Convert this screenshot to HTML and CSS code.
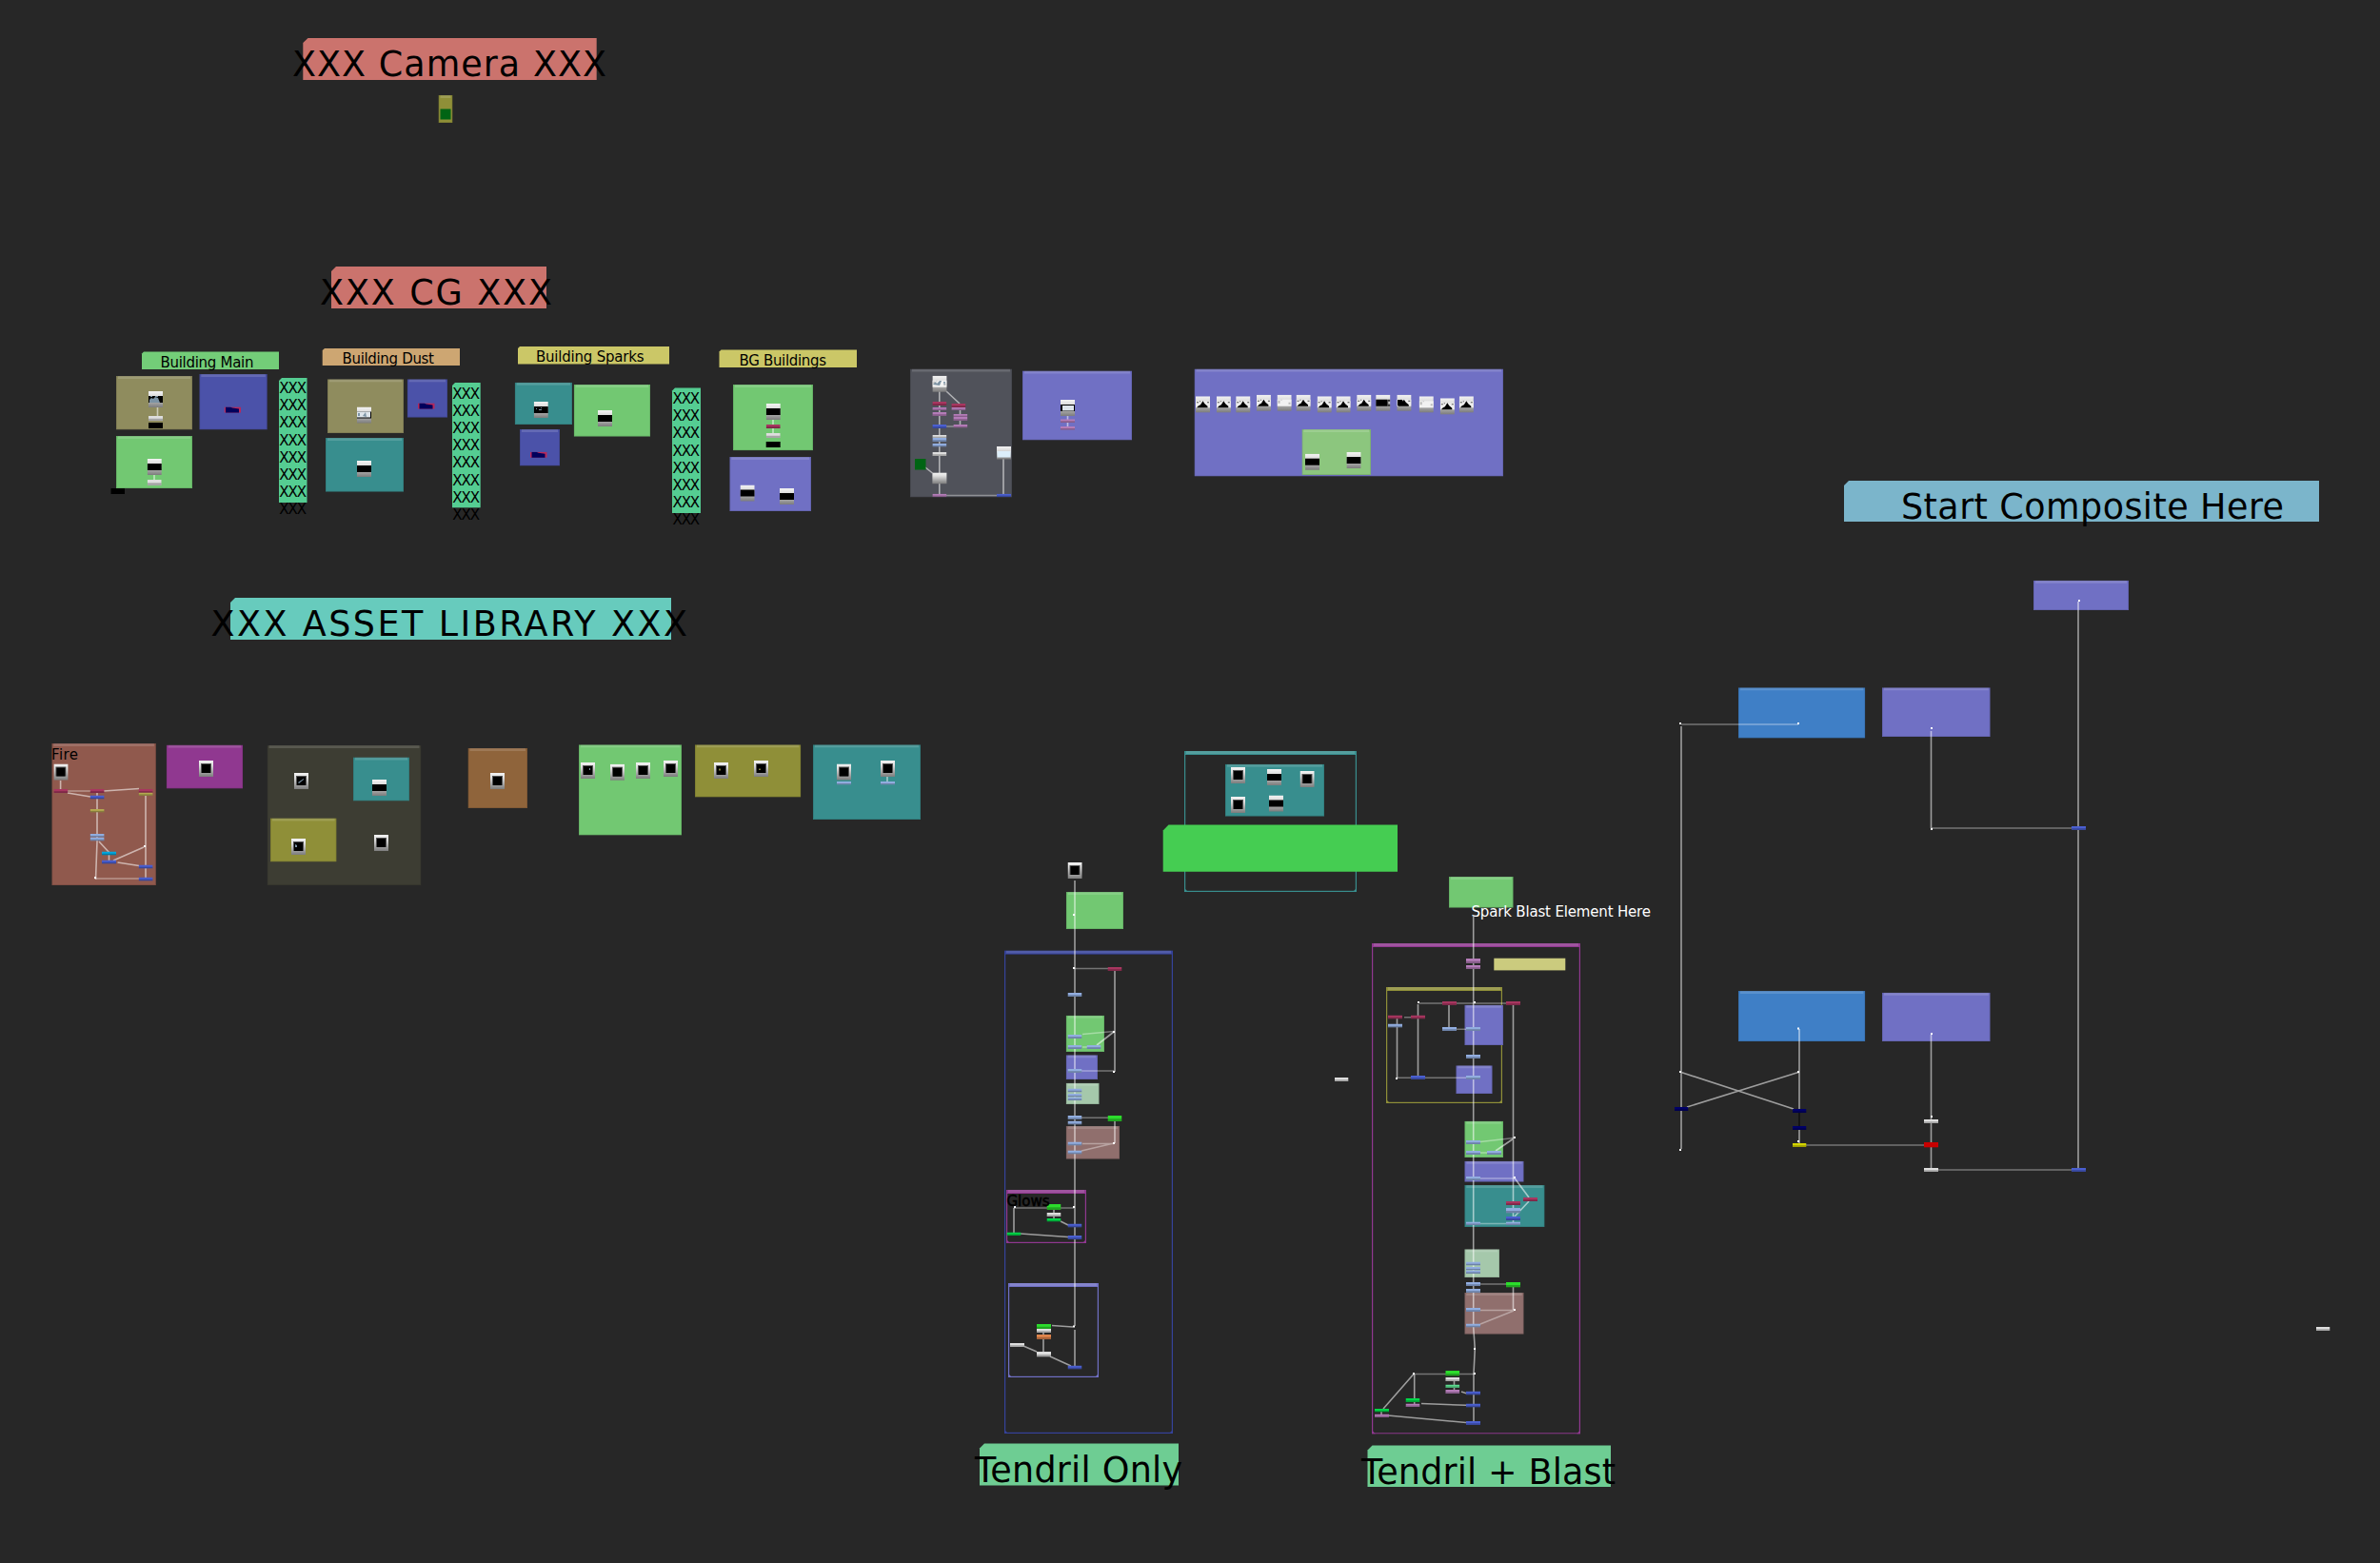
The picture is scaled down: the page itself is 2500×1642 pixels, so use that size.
FILE: index.html
```html
<!DOCTYPE html>
<html lang="en">
<head>
<meta charset="utf-8">
<title>Node Graph</title>
<link rel="stylesheet" href="styles.css">
</head>
<body>
<main class="graph">
<svg class="canvas" width="2500" height="1642" viewBox="0 0 2500 1642">
<defs>
<linearGradient id="metal" x1="0" y1="0" x2="0" y2="1"><stop offset="0" stop-color="#f4f4f4"/><stop offset=".3" stop-color="#dcdcdc"/><stop offset="1" stop-color="#7c7c7c"/></linearGradient>
<symbol id="bd"><rect class="fill" width="100%" height="100%"/><rect class="edge" /><rect class="shine"/></symbol>
<symbol id="frame"><rect class="outline"/><rect class="cap"/><rect class="shine"/><svg class="corner" x="0" y="100%"><path class="fill" d="M0 0v-4l4 4z"/></svg><svg class="corner" x="100%" y="100%"><path class="fill" d="M0 0v-4l-4 4z"/></svg></symbol>
<symbol id="bar"><rect class="fill" width="100%" height="100%"/><rect class="shade" y="55%" width="100%" height="45%"/></symbol>
<symbol id="wide"><rect width="15" height="17" fill="url(#metal)"/><rect y="5" width="15" height="7" fill="#000"/></symbol>
<symbol id="square"><rect width="15" height="17" fill="url(#metal)"/><rect x="2" y="3" width="11" height="10" fill="#555"/><rect x="3" y="4" width="9" height="9" fill="#000"/></symbol>
<symbol id="shot"><rect width="15" height="17" fill="url(#metal)"/><rect y="5" width="15" height="7" fill="#eee"/><path d="M1 12l2-2 2-1 2.500-4 2 3 3 2.500v1.500z" fill="#000"/><path d="M1 6h2v1H1zM4 5h1v1H4zM12 6h2v1h-2z" fill="#555"/></symbol>
<symbol id="shotlight"><rect width="15" height="17" fill="url(#metal)"/><rect y="5" width="15" height="7" fill="#f2f2f2"/><path d="M1 6h2v3H1zM4 5h1v1H4zM12 8h2v2h-2z" fill="#bbb"/></symbol>
<symbol id="shotdark"><rect width="15" height="17" fill="url(#metal)"/><rect y="5" width="12" height="7" fill="#000"/><path d="M12 5h3v2h-2v3h2v2h-3z" fill="#333"/></symbol>
<symbol id="lens"><rect width="17.500" height="6" fill="#b8285a"/><path d="M1.500 0h5l2 1 7 1v4h-14z" fill="#00005c"/></symbol>
</defs>

<g class="backdrops">
<use href="#bd" class="olive" x="460.5" y="100" width="15" height="29"/>
<use href="#bd" class="khaki" x="122" y="395" width="80" height="56.5"/>
<use href="#bd" class="indigo" x="209.3" y="393" width="71.5" height="58.5"/>
<use href="#bd" class="green" x="122" y="458" width="80" height="55"/>
<use href="#bd" class="khaki" x="344" y="398.3" width="80" height="56.7"/>
<use href="#bd" class="indigo" x="427.7" y="398.3" width="42.3" height="40.4"/>
<use href="#bd" class="teal" x="342" y="460" width="82" height="56.7"/>
<use href="#bd" class="teal" x="540.7" y="401.7" width="60.3" height="44.3"/>
<use href="#bd" class="green" x="602.7" y="404" width="80.3" height="54.7"/>
<use href="#bd" class="indigo" x="546" y="451" width="42" height="38.5"/>
<use href="#bd" class="green" x="770" y="404" width="84" height="69.3"/>
<use href="#bd" class="violet" x="766.3" y="480" width="85.7" height="57"/>
<use href="#bd" class="slate" x="956" y="387.5" width="107" height="135"/>
<use href="#bd" class="violet" x="1074" y="389.5" width="115" height="73"/>
<use href="#bd" class="violet" x="1254.5" y="387.5" width="324.5" height="113"/>
<use href="#bd" class="leaf" x="1367.5" y="451" width="72.5" height="48"/>
<use href="#bd" class="rust" x="54.3" y="781" width="109.6" height="149"/>
<use href="#bd" class="plum" x="174.7" y="782.6" width="80.5" height="46"/>
<use href="#bd" class="moss" x="280.5" y="783" width="162" height="147"/>
<use href="#bd" class="teal" x="371" y="795.5" width="59" height="46"/>
<use href="#bd" class="olive" x="284" y="859.4" width="69.6" height="46"/>
<use href="#bd" class="brown" x="491.5" y="786" width="62.5" height="63"/>
<use href="#bd" class="green" x="608" y="782.3" width="108" height="95.3"/>
<use href="#bd" class="olive" x="730" y="782.3" width="111.3" height="55.3"/>
<use href="#bd" class="teal" x="854" y="782.3" width="113" height="78.7"/>
<use href="#frame" class="teal" x="1244" y="789" width="181" height="148"/>
<use href="#bd" class="teal" x="1287" y="802.7" width="104" height="55"/>
<path class="bright" d="M1227.5 866.5H1468V915.7H1221.7V872.5z"/>
<use href="#bd" class="green" x="1119.8" y="937" width="60.2" height="39"/>
<use href="#frame" class="royal" x="1055" y="998.6" width="177" height="507.4"/>
<use href="#bd" class="green" x="1119.7" y="1066.7" width="40.3" height="38.3"/>
<use href="#bd" class="violet" x="1119.7" y="1108.3" width="33.3" height="25.7"/>
<use href="#bd" class="mint" x="1119.7" y="1137.7" width="35" height="22.3"/>
<use href="#bd" class="rose" x="1119.7" y="1183" width="56.3" height="34.7"/>
<use href="#frame" class="plum" x="1057" y="1250" width="84" height="56"/>
<use href="#frame" class="violet" x="1059" y="1348" width="95" height="99"/>
<use href="#bd" class="green" x="1522" y="921" width="67.7" height="32.7"/>
<use href="#frame" class="plum" x="1441" y="991" width="219" height="515.5"/>
<rect class="cream" x="1569.3" y="1006.7" width="75" height="12.7"/>
<use href="#frame" class="olive" x="1456" y="1037" width="122" height="122"/>
<use href="#bd" class="violet" x="1538.3" y="1055.7" width="40.7" height="42.3"/>
<use href="#bd" class="violet" x="1529.3" y="1119.3" width="38.4" height="29.7"/>
<use href="#bd" class="green" x="1538.3" y="1177.7" width="40.7" height="38.3"/>
<use href="#bd" class="violet" x="1538.3" y="1219.7" width="62.4" height="22"/>
<use href="#bd" class="teal" x="1538.3" y="1245" width="84.3" height="44"/>
<use href="#bd" class="mint" x="1538.3" y="1312.3" width="36.7" height="29.7"/>
<use href="#bd" class="rose" x="1538.3" y="1358" width="62.4" height="43.7"/>
<use href="#bd" class="violet" x="2136" y="609.7" width="100" height="31.3"/>
<use href="#bd" class="azure" x="1826" y="722.3" width="133.3" height="53.3"/>
<use href="#bd" class="violet" x="1977" y="722.3" width="113.7" height="51.7"/>
<use href="#bd" class="azure" x="1826" y="1041" width="133.3" height="53"/>
<use href="#bd" class="violet" x="1977" y="1042.7" width="113.7" height="51.3"/>
</g>

<g class="labels">
<path class="coral" d="M323.5 40H626.7V84H318.3V45z"/>
<path class="coral" d="M353 280H574V324H348V285z"/>
<path class="aqua" d="M247 628H705V672H242V633z"/>
<path class="sky" d="M1942 505H2436V548H1937V510z"/>
<path class="jade" d="M1034 1516.5H1238V1560.5H1029V1521.5z"/>
<path class="jade" d="M1441.5 1518.5H1692V1562H1436.5V1523.5z"/>
<path class="lime" d="M151 369.5H293V388H149V371.5z"/>
<path class="tan" d="M341 366H483V384H338.7V368z"/>
<path class="straw" d="M546 364H703V382.5H544V366z"/>
<path class="straw" d="M757.5 367.5H900V386H755.5V369.5z"/>
<path class="emerald" d="M296 397H322.5V528H293V400z"/>
<path class="emerald" d="M478 402H504.7V533.3H475V405z"/>
<path class="emerald" d="M709 407.5H736V539H706V410.5z"/>
</g>

<g class="wires">
<path d="M165.5 428V437M162 498V504M812 440V458"/>
<path d="M986.8 411V519M994 411L1008 424M1008.500 430V447M972 491L979.500 497M1054 482V519M1121.500 436V449"/>
<path class="soft" d="M994 448H1002M994 520.500H1047"/>
<path d="M63.6 820V830M102 832V884L100.5 924M104 884L115 896M114.5 898V905M119 904L151 890M153 832V922M71 833L95 837M109 831L146 828.5M123.5 906L146 909.5"/>
<path class="soft" d="M71 831H95M101 923H146"/>
<path d="M932 815V821"/>
<path d="M1129 925V1393M1129 1397V1435M1171 1019V1126M1152 1098L1170 1084M1171 1178V1201M1107 1271V1281M1114 1283L1122 1287M1065 1269V1295M1072 1296L1122 1299.5M1105 1392.5L1127 1394M1096 1399V1420M1075 1414L1089 1420M1103 1425L1125 1435"/>
<path class="soft" d="M1129 1017.5H1164M1137 1086.5L1170 1083.5M1137 1100H1142M1136 1125H1170M1136 1174.3H1164M1137 1201.5H1170M1136 1209L1170 1201M1065 1269H1128"/>
<path d="M1547.7 963V1394L1549.3 1417L1548 1443V1495M1489.5 1055V1132M1522 1055V1080M1589.5 1055V1285M1467.5 1070V1132M1571 1209L1590 1196M1590.5 1237L1606 1258M1606 1262L1591 1278M1589.5 1352V1376M1527.5 1450V1461M1535 1462L1541 1464M1485.7 1444V1475M1493 1474.5L1540 1476.3M1484.5 1444L1453 1480M1451 1483V1486M1458 1487L1540 1494.5"/>
<path class="soft" d="M1491 1054H1583M1475 1068.7H1482M1467 1132.3H1541M1529 1081.3H1541M1555 1199.5L1590 1195.5M1555 1211H1562M1555 1238H1590M1555 1285.5H1582M1555 1349H1582M1555 1376.5H1590M1555 1391L1590 1377M1484 1443.5H1548"/>
<path d="M1766 763V1207M2028.5 768V870M2183 632V1228M1890 1081V1165M1890 1187V1201M2028.5 1087V1228M1766 1126.5L1884 1165M1889 1126.5L1772 1163"/>
<path class="soft" d="M1766 761H1889M2029 870H2176M1897 1203H2021M2036 1229H2176"/>
<path class="dark" d="M1890 1168V1183"/>
</g>

<g class="nodes">
<rect class="camera" x="462.5" y="114.5" width="11" height="11"/>
<use href="#wide" x="156" y="411"/><path class="speck" d="M157 423v-3l2-2 2 1 2-2 3 1 2 5zM158 416h2v1h-2zM163 416h3v1h-3z"/>
<use href="#bar" class="n-white" x="156" y="437" width="15" height="5"/><rect class="black" x="156" y="444" width="15" height="6"/>
<use href="#wide" x="154.7" y="482"/><use href="#bar" class="n-white" x="154.7" y="504" width="15" height="6"/>
<rect class="black" x="116.5" y="513" width="14.5" height="6"/>
<use href="#lens" x="235.5" y="427.5"/><use href="#lens" x="439" y="423.5"/><use href="#lens" x="557" y="474.7"/>
<use href="#wide" x="375" y="427.5"/><path class="haze" d="M375 432.5h14v6h-14z"/><path class="speck" d="M376 434h2v3h-2zM381 437l3-4 1 5z"/>
<use href="#wide" x="375" y="484"/>
<use href="#wide" x="560.7" y="422"/><path class="speck" d="M563 429h1v1h-1zM566 430h3v1h-3zM568 428h1v1h-1z"/>
<use href="#wide" x="628" y="431"/>
<use href="#wide" x="804.7" y="424"/>
<use href="#bar" class="n-wine" x="804.7" y="446" width="15" height="4"/><use href="#bar" class="n-white" x="804.7" y="455" width="15" height="5"/><rect class="black" x="804.7" y="464" width="15" height="6"/>
<use href="#wide" x="777.5" y="509.5"/><use href="#wide" x="819" y="513"/>
</g>

<g class="nodes">
<use href="#shotlight" x="979.4" y="394.7"/><path class="speck" d="M980 404l3-3 1 2 3-3h2l-2 5zM991 401h2l-1 4z"/>
<use href="#bar" class="n-wine" x="979.4" y="422" width="15" height="4"/><use href="#bar" class="n-pink" x="979.4" y="428" width="15" height="3"/><use href="#bar" class="n-pink" x="979.4" y="433" width="15" height="4"/>
<use href="#bar" class="n-wine" x="999.4" y="424" width="15" height="4"/><use href="#bar" class="n-pink" x="999.4" y="428" width="15" height="3"/>
<use href="#bar" class="n-pink" x="1001.4" y="435" width="15" height="3"/><use href="#bar" class="n-pink" x="1001.4" y="438" width="15" height="4"/><use href="#bar" class="n-pink" x="1001.4" y="446" width="15" height="3.5"/>
<use href="#bar" class="n-blue" x="979.4" y="446" width="15" height="4"/>
<use href="#bar" class="n-white" x="979.4" y="457" width="15" height="3"/><use href="#bar" class="n-pale" x="979.4" y="460" width="15" height="4"/><use href="#bar" class="n-pale" x="979.4" y="466" width="15" height="3.500"/>
<use href="#bar" class="n-white" x="979.4" y="475" width="15" height="4"/>
<rect class="camera" x="961" y="482" width="11.500" height="11.500"/>
<rect x="979.4" y="496.700" width="15" height="11.500" fill="url(#metal)"/>
<use href="#bar" class="n-pink" x="979.4" y="518.7" width="15" height="3.500"/><use href="#bar" class="n-blue" x="1047" y="518.7" width="15" height="3.500"/>
<rect x="1047" y="469" width="15" height="13.500" fill="url(#metal)"/><rect class="ice" x="1047.500" y="474" width="14" height="6.500"/>
<use href="#wide" x="1114" y="420"/><rect class="haze" x="1116" y="426" width="12" height="5.500"/>
<use href="#bar" class="n-pink" x="1114" y="440.300" width="15" height="3.700"/><use href="#bar" class="n-pink" x="1114" y="448" width="15" height="3.700"/>
<use href="#shot" x="1256" y="416.300"/><use href="#shot" x="1277.800" y="416.300"/><use href="#shot" x="1298.200" y="416.300"/><use href="#shot" x="1319.900" y="414.700"/>
<use href="#shotlight" x="1341.500" y="414.700"/><use href="#shot" x="1361.500" y="414.700"/><use href="#shot" x="1383.600" y="416.300"/><use href="#shot" x="1403.500" y="416.300"/>
<use href="#shot" x="1425.200" y="414.700"/><use href="#shotdark" x="1445.200" y="414.700"/><use href="#shot" x="1467.300" y="414.700"/><path class="black" d="M1468 420h5l3 6h-8z"/>
<use href="#shotlight" x="1490.700" y="416.300"/><use href="#shot" x="1512.800" y="418.300"/><use href="#shot" x="1532.800" y="416.300"/>
<use href="#wide" x="1371" y="476.700"/><use href="#wide" x="1414.400" y="475"/>
</g>

<g class="nodes">
<use href="#square" x="56.4" y="802.5"/><use href="#square" x="209" y="799"/><use href="#square" x="309" y="812"/><path class="speck" d="M313 822l6-4v1l-5 4z"/><use href="#square" x="306" y="881"/><path class="speck" d="M310 887l2 1v2h-2z"/><use href="#square" x="393" y="877"/><use href="#square" x="515" y="812"/><use href="#wide" x="391" y="819"/>
<use href="#bar" class="n-wine" x="56.4" y="829" width="15" height="4"/><use href="#bar" class="n-wine" x="94.6" y="829" width="15" height="4"/><use href="#bar" class="n-wine" x="145.6" y="829" width="15" height="4"/><use href="#bar" class="n-olive" x="145.6" y="832.5" width="15" height="3.5"/>
<use href="#bar" class="n-blue" x="94.6" y="835.5" width="15" height="4"/><use href="#bar" class="n-olive" x="94.6" y="850" width="15" height="3.5"/>
<use href="#bar" class="n-pale" x="94.6" y="876" width="15" height="3.5"/><use href="#bar" class="n-pale" x="94.6" y="879.5" width="15" height="4"/>
<use href="#bar" class="n-cyan" x="107" y="894.5" width="15" height="4"/><use href="#bar" class="n-blue" x="107" y="903.5" width="15" height="4"/><use href="#bar" class="n-blue" x="145.6" y="908.5" width="15" height="4"/><use href="#bar" class="n-blue" x="145.6" y="921.5" width="15" height="4"/>
<use href="#square" x="610" y="801"/><use href="#square" x="641" y="802.7"/><use href="#square" x="668" y="801"/><use href="#square" x="697" y="799"/>
<use href="#square" x="750" y="801"/><use href="#square" x="792" y="799"/><use href="#square" x="879" y="802.5"/><use href="#square" x="925" y="799"/>
<path class="yolk" d="M755 807.5h2v2h-2zM797 807.5h2v1.5h-2z"/><path class="speck" d="M619 807h1v2h-1z"/>
<use href="#bar" class="n-pale" x="879" y="821" width="15" height="3.5"/><use href="#bar" class="n-pale" x="925" y="821" width="15" height="3.5"/>
<use href="#square" x="1293" y="806"/><use href="#square" x="1365.500" y="810"/><use href="#square" x="1293" y="837"/><use href="#wide" x="1331" y="808"/><use href="#wide" x="1333" y="835.5"/>
<use href="#square" x="1121.5" y="906"/>
</g>

<g class="nodes">
<use href="#bar" class="n-wine" x="1163.5" y="1016" width="15" height="4"/><use href="#bar" class="n-pale" x="1121.5" y="1043" width="15" height="4"/>
<use href="#bar" class="n-pale" x="1121.5" y="1087" width="15" height="4"/><use href="#bar" class="n-pale" x="1121.5" y="1098" width="15" height="4"/><use href="#bar" class="n-pale" x="1141.5" y="1098" width="15" height="4"/>
<use href="#bar" class="n-pale" x="1121.5" y="1123" width="15" height="4"/><use href="#bar" class="n-pale" x="1121.5" y="1143.5" width="15" height="4"/><use href="#bar" class="n-pale" x="1121.5" y="1149" width="15" height="3.5"/><use href="#bar" class="n-pale" x="1121.5" y="1152.5" width="15" height="3.5"/>
<use href="#bar" class="n-pale" x="1121.5" y="1172" width="15" height="4"/><use href="#bar" class="n-pale" x="1121.5" y="1177.5" width="15" height="4"/><use href="#bar" class="n-green" x="1163.5" y="1172" width="15" height="6"/>
<use href="#bar" class="n-pale" x="1121.5" y="1199.5" width="15" height="4"/><use href="#bar" class="n-pale" x="1121.5" y="1208.5" width="15" height="4"/>
<use href="#bar" class="n-green" x="1099.5" y="1265" width="15" height="6"/><use href="#bar" class="n-white" x="1099.5" y="1274" width="15" height="4"/><use href="#bar" class="n-lime" x="1099.5" y="1280" width="15" height="3.5"/>
<use href="#bar" class="n-blue" x="1121.5" y="1285.5" width="15" height="4"/><use href="#bar" class="n-blue" x="1121.5" y="1298" width="15" height="4"/><use href="#bar" class="n-lime" x="1057.5" y="1294.5" width="15" height="3.5"/>
<use href="#bar" class="n-green" x="1089" y="1391" width="15" height="5"/><use href="#bar" class="n-white" x="1089" y="1396" width="15" height="4"/><use href="#bar" class="n-orange" x="1089" y="1402" width="15" height="5"/>
<use href="#bar" class="n-white" x="1061" y="1411" width="15" height="4"/><use href="#bar" class="n-white" x="1089" y="1420" width="15" height="5.5"/><use href="#bar" class="n-blue" x="1121.5" y="1434.5" width="15" height="4"/>
</g>

<g class="nodes">
<use href="#bar" class="n-pink" x="1540" y="1007" width="15" height="5"/><use href="#bar" class="n-pink" x="1540" y="1014" width="15" height="4"/>
<use href="#bar" class="n-wine" x="1515" y="1052" width="15" height="4"/><use href="#bar" class="n-wine" x="1582" y="1052" width="15" height="4"/><use href="#bar" class="n-wine" x="1458" y="1066.5" width="15" height="4"/><use href="#bar" class="n-wine" x="1482" y="1066.5" width="15" height="4"/>
<use href="#bar" class="n-pale" x="1458" y="1075.5" width="15" height="4"/><use href="#bar" class="n-pale" x="1515" y="1079" width="15" height="4"/><use href="#bar" class="n-pale" x="1540" y="1079" width="15" height="4"/>
<use href="#bar" class="n-pale" x="1540" y="1108" width="15" height="4"/><use href="#bar" class="n-blue" x="1482" y="1130" width="15" height="4"/><use href="#bar" class="n-pale" x="1540" y="1130" width="15" height="4"/>
<use href="#bar" class="n-pale" x="1540" y="1198" width="15" height="4"/><use href="#bar" class="n-pale" x="1540" y="1209" width="15" height="4"/><use href="#bar" class="n-pale" x="1562" y="1209" width="15" height="4"/><use href="#bar" class="n-pale" x="1540" y="1236" width="15" height="4"/>
<use href="#bar" class="n-wine" x="1600" y="1258" width="15" height="4"/><use href="#bar" class="n-wine" x="1582" y="1262" width="15" height="4"/><use href="#bar" class="n-pale" x="1582" y="1269" width="15" height="5.5"/><use href="#bar" class="n-blue" x="1582" y="1278" width="15" height="4"/><use href="#bar" class="n-pale" x="1582" y="1283.5" width="15" height="3.5"/><use href="#bar" class="n-pale" x="1540" y="1283.5" width="15" height="3.5"/>
<use href="#bar" class="n-pale" x="1540" y="1325.5" width="15" height="4"/><use href="#bar" class="n-pale" x="1540" y="1331" width="15" height="3.5"/><use href="#bar" class="n-pale" x="1540" y="1334.5" width="15" height="3.5"/>
<use href="#bar" class="n-pale" x="1540" y="1347" width="15" height="4"/><use href="#bar" class="n-pale" x="1540" y="1354" width="15" height="4"/><use href="#bar" class="n-green" x="1582" y="1347" width="15" height="5.5"/>
<use href="#bar" class="n-pale" x="1540" y="1374" width="15" height="4"/><use href="#bar" class="n-pale" x="1540" y="1390.5" width="15" height="4"/>
<use href="#bar" class="n-green" x="1518.3" y="1440" width="15" height="5.5"/><use href="#bar" class="n-white" x="1518.3" y="1447" width="15" height="4"/><use href="#bar" class="n-sea" x="1518.3" y="1454.5" width="15" height="3.5"/><use href="#bar" class="n-pink" x="1518.3" y="1460" width="15" height="4"/>
<use href="#bar" class="n-blue" x="1540" y="1461.5" width="15" height="4"/><use href="#bar" class="n-blue" x="1540" y="1474.5" width="15" height="4"/><use href="#bar" class="n-blue" x="1540" y="1493" width="15" height="4"/>
<use href="#bar" class="n-lime" x="1476.5" y="1469" width="15" height="4"/><use href="#bar" class="n-pink" x="1476.5" y="1474.5" width="15" height="3.5"/><use href="#bar" class="n-lime" x="1444" y="1480" width="15" height="3.5"/><use href="#bar" class="n-pink" x="1444" y="1485.5" width="15" height="3.5"/>
</g>

<g class="nodes">
<use href="#bar" class="n-blue" x="2176" y="868" width="15" height="4"/><use href="#bar" class="n-navy" x="1759" y="1163" width="14.5" height="4"/><use href="#bar" class="n-navy" x="1883" y="1165" width="14.5" height="4"/><use href="#bar" class="n-navy" x="1883" y="1183" width="14.5" height="4"/>
<use href="#bar" class="n-yellow" x="1883" y="1201" width="14.5" height="4"/><rect class="red" x="2021" y="1200" width="15" height="5.3"/><use href="#bar" class="n-white" x="2021" y="1176" width="15" height="4"/><use href="#bar" class="n-white" x="2021" y="1227" width="15" height="4"/><use href="#bar" class="n-blue" x="2176" y="1227" width="15" height="4"/>
<use href="#bar" class="n-white" x="1402" y="1132" width="14.5" height="4"/><use href="#bar" class="n-white" x="2433" y="1394" width="14.5" height="4"/>
</g>

<g class="dots">
<path d="M151 888h2v2h-2zM99 921h2v2h-2zM1127 960h2v2h-2zM1127 1016h2v2h-2zM1169 1083h2v2h-2zM1169 1125h2v2h-2zM1169 1200h2v2h-2zM1065 1267h2v2h-2zM1127 1267h2v2h-2zM1127 1392.500h2v2h-2z"/>
<path d="M1489 1052h2v2h-2zM1548 1052h2v2h-2zM1466 1132h2v2h-2zM1590 1194h2v2h-2zM1590 1236h2v2h-2zM1590 1375h2v2h-2zM1548 1416h2v2h-2zM1548 1442h2v2h-2zM1484 1442h2v2h-2z"/>
<path d="M1764 759h2v2h-2zM1888 759h2v2h-2zM2028 764h2v2h-2zM2028 870h2v2h-2zM2183 630h2v2h-2zM1888 1079.500h2v2h-2zM2028 1085h2v2h-2zM1764 1125h2v2h-2zM1888 1125h2v2h-2zM2028 1172h2v2h-2zM1888 1198h2v2h-2zM1764 1207h2v2h-2z"/>
</g>

<g class="titles">
<text x="307" y="80" textLength="330">XXX Camera XXX</text>
<text x="336" y="320" textLength="244">XXX CG XXX</text>
<text x="221.500" y="668" textLength="500.500">XXX ASSET LIBRARY XXX</text>
<text x="1997" y="544.500" textLength="402">Start Composite Here</text>
<text x="1024" y="1556.500" textLength="218">Tendril Only</text>
<text x="1430" y="1558.500" textLength="267">Tendril + Blast</text>
</g>
<g class="captions">
<text x="168.500" y="385.500" textLength="98">Building Main</text>
<text x="359.500" y="381.700" textLength="96.500">Building Dust</text>
<text x="563" y="380" textLength="113.500">Building Sparks</text>
<text x="776.500" y="384" textLength="91.500">BG Buildings</text>
<text x="54" y="797.500" textLength="28">Fire</text>
<text class="heavy" x="1057.500" y="1267" textLength="45">Glows</text>
<text class="light" x="1545.500" y="962.700" textLength="188.500">Spark Blast Element Here</text>
</g>
<g class="stack">
<text x="293.300" y="413">XXX</text><text x="293.300" y="431.200">XXX</text><text x="293.300" y="449.400">XXX</text><text x="293.300" y="467.600">XXX</text><text x="293.300" y="485.800">XXX</text><text x="293.300" y="504">XXX</text><text x="293.300" y="522.200">XXX</text><text x="293.300" y="540.400">XXX</text>
<text x="475.300" y="418.500">XXX</text><text x="475.300" y="436.700">XXX</text><text x="475.300" y="454.900">XXX</text><text x="475.300" y="473.100">XXX</text><text x="475.300" y="491.300">XXX</text><text x="475.300" y="509.500">XXX</text><text x="475.300" y="527.700">XXX</text><text x="475.300" y="545.900">XXX</text>
<text x="706.500" y="424">XXX</text><text x="706.500" y="442.200">XXX</text><text x="706.500" y="460.400">XXX</text><text x="706.500" y="478.600">XXX</text><text x="706.500" y="496.800">XXX</text><text x="706.500" y="515">XXX</text><text x="706.500" y="533.200">XXX</text><text x="706.500" y="551.400">XXX</text>
</g>
</svg>
</main>
</body>
</html>
```
FILE: styles.css
```css
body { margin: 0; background: #272727; }
.graph { width: 2500px; height: 1642px; overflow: hidden; background: #272727; }
.canvas { display: block; }
.fill { fill: currentColor; }
.corner { overflow: visible; }
.edge { x: .5px; y: .5px; width: calc(100% - 1px); height: calc(100% - 1px); fill: none; stroke: #000; stroke-opacity: .1; }
.shine { x: 2px; y: 0; width: calc(100% - 4px); height: 3px; fill: #fff; fill-opacity: .14; }
.outline { x: .6px; y: .6px; width: calc(100% - 1.2px); height: calc(100% - 1.2px); fill: none; stroke: currentColor; stroke-width: 1.2px; }
.cap { x: 0; y: 0; width: 100%; height: 4px; fill: currentColor; }
.shade { fill: #000; fill-opacity: .25; }
text { font-family: "DejaVu Sans", sans-serif; white-space: pre; }
.titles { font-size: 36.5px; fill: #000; }
.captions { font-size: 15px; fill: #000; }
.stack { font-size: 15px; letter-spacing: -1.1px; fill: #000; }
.heavy { stroke: #000; stroke-width: .5px; }
.light { fill: #fff; }
.wires path { fill: none; stroke: #fff; stroke-opacity: .55; stroke-width: 1.6px; }
.wires .soft { stroke-opacity: .36; }
.wires .dark { stroke: #111; stroke-opacity: 1; }
.dots { fill: #fff; }
.khaki { color: #8f8c5e; }
.olive { color: #8f8f38; }
.indigo { color: #4b52a9; }
.green { color: #72c872; }
.teal { color: #388e8e; }
.violet { color: #7070c4; }
.slate { color: #50525a; }
.leaf { color: #8cc67e; }
.rust { color: #90594d; }
.plum { color: #903890; }
.moss { color: #3d3d33; }
.brown { color: #8f643b; }
.royal { color: #35429a; }
.mint { color: #a5c8ab; }
.rose { color: #906f6d; }
.azure { color: #3f7fc6; }
.bright { fill: #45cd52; }
.cream { fill: #cbcb7e; }
.coral { fill: #cb736d; }
.aqua { fill: #67cbbd; }
.sky { fill: #7bb5cb; }
.jade { fill: #6ecd93; }
.lime { fill: #73cd78; }
.tan { fill: #cda672; }
.straw { fill: #cbc767; }
.emerald { fill: #55cd92; }
.camera { fill: #006414; }
.black { fill: #000; }
.red { fill: #c80000; }
.speck { fill: #7c93a4; }
.haze { fill: #dde4ea; }
.ice { fill: #dceefa; }
.yolk { fill: #77773a; }
.n-white { color: #dedede; }
.n-pale { color: #92aee0; }
.n-blue { color: #4a5fd0; }
.n-wine { color: #a83660; }
.n-pink { color: #b47cb8; }
.n-olive { color: #b4a850; }
.n-cyan { color: #00a8e0; }
.n-green { color: #2cdc2c; }
.n-lime { color: #00d848; }
.n-sea { color: #5cdc90; }
.n-orange { color: #e0854c; }
.n-navy { color: #000068; }
.n-yellow { color: #d4d400; }
```
